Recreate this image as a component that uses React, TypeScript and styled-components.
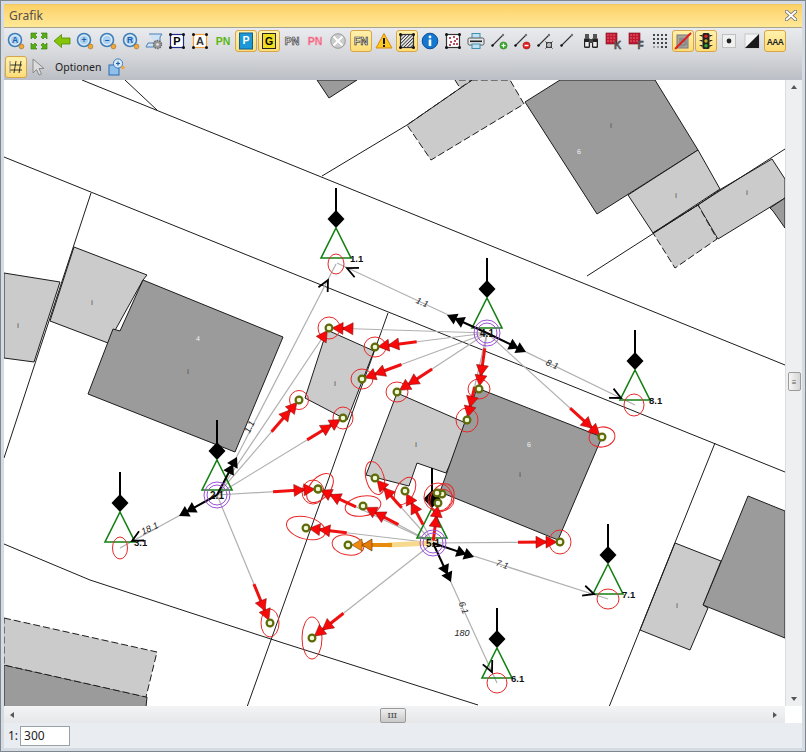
import React from 'react'
import styled, { createGlobalStyle } from 'styled-components'

type Pt = [number, number]

const GlobalStyle = createGlobalStyle`
  html, body { margin: 0; padding: 0; background: #e9ecf1; }
  body { font-family: "Noto Sans", "Liberation Sans", sans-serif; }
`

const Frame = styled.div`
  width: 806px;
  height: 752px;
  box-sizing: border-box;
  display: flex;
  flex-direction: column;
  padding: 3px;
  border: 1px solid #7f868e;
  background: #d5dbe3;
`

const TitleBar = styled.div`
  height: 24px;
  flex: none;
  box-sizing: border-box;
  display: flex;
  align-items: center;
  justify-content: space-between;
  padding: 0 5px 2px 5px;
  border-top: 1px solid #f3c860;
  border-bottom: 1px solid #a9a48c;
  background: linear-gradient(#fad066, #ffdc7e 45%, #ffe896);
`

const TitleText = styled.span`
  font-size: 12px;
  color: #55504a;
`

const Toolbars = styled.div`
  flex: none;
  height: 52px;
  display: flex;
  flex-direction: column;
  background: linear-gradient(#e9ebee, #d6d8dc 50%, #bbbec4);
`

const ToolRow = styled.div`
  height: 26px;
  display: flex;
  align-items: center;
  padding-left: 1px;
`

const ToolButton = styled.div<{ $active?: boolean }>`
  width: 22px;
  height: 22px;
  margin-right: 1px;
  box-sizing: border-box;
  display: flex;
  align-items: center;
  justify-content: center;
  border-radius: 3px;
  border: 1px solid ${p => (p.$active ? '#d8a548' : 'transparent')};
  background: ${p => (p.$active ? 'linear-gradient(#fff1ad, #fedd78)' : 'transparent')};
`

const OptionsLabel = styled.span`
  font-size: 10.5px;
  color: #222;
  margin: 0 7px 0 4px;
`

const MapRow = styled.div`
  flex: 1;
  min-height: 0;
  display: flex;
`

const Canvas = styled.div`
  flex: 1;
  overflow: hidden;
  background: #fff;
  svg { display: block; }
`

const VScroll = styled.div`
  width: 17px;
  flex: none;
  display: flex;
  flex-direction: column;
  align-items: center;
  background: #eeeff0;
  border-left: 1px solid #dcdcdc;
  box-sizing: border-box;
`

const VThumb = styled.div`
  width: 13px;
  height: 19px;
  margin-top: 283px;
  box-sizing: border-box;
  border: 1px solid #9a9a9a;
  border-radius: 2px;
  background: linear-gradient(90deg, #f6f6f6, #d5d5d5);
  display: flex;
  align-items: center;
  justify-content: center;
  font-size: 8px;
  line-height: 1;
  color: #555;
`

const ScrollArrow = styled.div<{ $dir: 'up' | 'down' | 'left' | 'right' }>`
  width: 0;
  height: 0;
  border: 3px solid transparent;
  ${p => (p.$dir === 'up' ? 'border-bottom: 4px solid #555; margin-top: 2px;' : '')}
  ${p => (p.$dir === 'down' ? 'border-top: 4px solid #555; margin-top: auto; margin-bottom: 2px;' : '')}
  ${p => (p.$dir === 'left' ? 'border-right: 4px solid #555; margin-left: 3px;' : '')}
  ${p => (p.$dir === 'right' ? 'border-left: 4px solid #555; margin-right: 5px;' : '')}
`

const HRow = styled.div`
  height: 17px;
  flex: none;
  display: flex;
`

const HScroll = styled.div`
  flex: 1;
  display: flex;
  align-items: center;
  justify-content: space-between;
  background: linear-gradient(#f3f4f5, #e6e7e8);
  padding-top: 1px;
  box-sizing: border-box;
`

const HThumb = styled.div`
  width: 26px;
  height: 15px;
  box-sizing: border-box;
  border: 1px solid #9a9a9a;
  border-radius: 2px;
  background: linear-gradient(#efefef, #c9c9c9);
  margin-left: -2px;
  display: flex;
  align-items: center;
  justify-content: center;
  font-size: 7px;
  font-weight: 700;
  letter-spacing: 0.5px;
  color: #555;
`

const Corner = styled.div`
  width: 17px;
  flex: none;
  background: #fff;
`

const StatusBar = styled.div`
  height: 25px;
  flex: none;
  display: flex;
  align-items: center;
  gap: 2px;
  padding-left: 4px;
  box-sizing: border-box;
  background: #e9ecf1;
  font-size: 12px;
  color: #222;
`

const ScaleBox = styled.div`
  width: 50px;
  height: 20px;
  box-sizing: border-box;
  background: #fff;
  border: 1px solid #9aa0a8;
  padding-left: 3px;
  font-size: 12px;
  line-height: 18px;
`

// ---------- toolbar icons ----------

const Svg = ({ children, size = 18 }: { children: React.ReactNode; size?: number }) => (
  <svg width={size} height={size} viewBox='0 0 18 18'>
    {children}
  </svg>
)

const iconFont = '"Liberation Sans", sans-serif'

const IconText = ({ x = 9, y = 13, size = 11, fill = '#000', stroke = 'none', sw = 0.6, children }: any) => (
  <text x={x} y={y} fontSize={size} fontFamily={iconFont} fontWeight={700} textAnchor='middle' fill={fill} stroke={stroke} strokeWidth={sw}>
    {children}
  </text>
)

const Lens = ({ label }: { label: string }) => (
  <Svg>
    <circle cx='8' cy='8' r='6.5' fill='#d8e9f8' stroke='#3f7fb8' strokeWidth='1.6' />
    <circle cx='8' cy='8' r='4' fill='#a9d0f0' />
    <IconText x={8} y={11} size={8.5} fill='#1f5fa8'>
      {label}
    </IconText>
    <circle cx='14.5' cy='14.5' r='2.4' fill='#f0a83c' stroke='#a06c1c' strokeWidth='0.6' />
  </Svg>
)

const Corners = ({ color }: { color: string }) => (
  <>
    <rect x='2.5' y='2.5' width='13' height='13' fill='#fff' stroke={color} strokeWidth='1.2' />
    {[[2.5, 2.5], [15.5, 2.5], [2.5, 15.5], [15.5, 15.5]].map(([x, y]) => (
      <circle key={`${x}-${y}`} cx={x} cy={y} r='1.5' fill='#111' />
    ))}
  </>
)

const LineIcon = ({ badge }: { badge?: React.ReactNode }) => (
  <Svg>
    <line x1='2' y1='14' x2='13' y2='3' stroke='#333' strokeWidth='1.1' />
    <circle cx='2.5' cy='13.5' r='1.2' fill='#111' />
    <circle cx='13' cy='3' r='1.2' fill='#777' />
    {badge}
  </Svg>
)

const RedBlock = ({ letter }: { letter: string }) => (
  <Svg>
    <rect x='1' y='1' width='11' height='11' fill='#c01830' stroke='#7c1020' strokeWidth='0.6' />
    {[3, 6, 9].map(x => [3, 6, 9].map(y => <circle key={`${x}${y}`} cx={x} cy={y} r='0.7' fill='#f08090' />))}
    <IconText x={12.5} y={17} size={10} fill='#666' stroke='#333' sw={0.4}>
      {letter}
    </IconText>
  </Svg>
)

const row1: { icon: React.ReactNode; active?: boolean }[] = [
  { icon: <Lens label='A' /> },
  {
    icon: (
      <Svg>
        <g fill='#58b010' stroke='#2f7a08' strokeWidth='0.6'>
          <path d='M1 1h6L5 3l2 2-2 2-2-2-2 2z' />
          <path d='M17 1h-6l2 2-2 2 2 2 2-2 2 2z' />
          <path d='M1 17h6l-2-2 2-2-2-2-2 2-2-2z' />
          <path d='M17 17h-6l2-2-2-2 2-2 2 2 2-2z' />
        </g>
      </Svg>
    ),
  },
  {
    icon: (
      <Svg>
        <path d='M1 9l7.5-6.5V6H17v6H8.5v3.5z' fill='#86c408' stroke='#4e8a08' strokeWidth='0.8' />
      </Svg>
    ),
  },
  { icon: <Lens label='+' /> },
  { icon: <Lens label='–' /> },
  { icon: <Lens label='R' /> },
  {
    icon: (
      <Svg>
        <path d='M4 2h13l-2 3v6H3l-2 4h11' fill='#cfe2f6' stroke='#4a80b8' strokeWidth='1' />
        <circle cx='12.5' cy='12.5' r='4' fill='#9a9a9a' stroke='#666' strokeDasharray='1.5 1' strokeWidth='1.4' />
        <circle cx='12.5' cy='12.5' r='1.3' fill='#e8e8e8' />
      </Svg>
    ),
  },
  {
    icon: (
      <Svg>
        <Corners color='#1f2f90' />
        <IconText size={11} y={13}>
          P
        </IconText>
      </Svg>
    ),
  },
  {
    icon: (
      <Svg>
        <Corners color='#f0a040' />
        <IconText size={11} y={13} fill='#333'>
          A
        </IconText>
      </Svg>
    ),
  },
  {
    icon: (
      <Svg>
        <IconText size={10.5} y={13} fill='#58b810'>
          PN
        </IconText>
      </Svg>
    ),
  },
  {
    active: true,
    icon: (
      <Svg>
        <rect x='2.5' y='1' width='13' height='16' fill='#1c98d8' stroke='#115f90' />
        <IconText size={10.5} y={12} fill='#fff'>
          P
        </IconText>
      </Svg>
    ),
  },
  {
    active: true,
    icon: (
      <Svg>
        <rect x='2.5' y='1.5' width='13' height='15' fill='#f0dc20' stroke='#222' />
        <IconText size={10.5} y={13}>
          G
        </IconText>
      </Svg>
    ),
  },
  {
    icon: (
      <Svg>
        <IconText size={10.5} y={13} fill='#ddd' stroke='#333'>
          PN
        </IconText>
      </Svg>
    ),
  },
  {
    icon: (
      <Svg>
        <IconText size={10.5} y={13} fill='#f04c70' stroke='#f4a0b0'>
          PN
        </IconText>
      </Svg>
    ),
  },
  {
    icon: (
      <Svg>
        <circle cx='9' cy='9' r='7.3' fill='#ccc' stroke='#999' />
        <path d='M4.5 4.5l9 9M13.5 4.5l-9 9' stroke='#fff' strokeWidth='1.8' />
      </Svg>
    ),
  },
  {
    active: true,
    icon: (
      <Svg>
        <IconText size={10.5} y={13} fill='#eee' stroke='#222'>
          FN
        </IconText>
      </Svg>
    ),
  },
  {
    icon: (
      <Svg>
        <path d='M9 1.5L17 16H1z' fill='#fcc820' stroke='#d88a10' strokeWidth='1' />
        <rect x='8' y='6' width='2' height='6' fill='#111' />
        <rect x='8' y='13' width='2' height='2' fill='#111' />
      </Svg>
    ),
  },
  {
    active: true,
    icon: (
      <Svg>
        <defs>
          <pattern id='hatch' width='2.4' height='2.4' patternUnits='userSpaceOnUse' patternTransform='rotate(45)'>
            <rect width='1' height='2.4' fill='#333' />
          </pattern>
        </defs>
        <Corners color='#333' />
        <rect x='3' y='3' width='12' height='12' fill='url(#hatch)' />
      </Svg>
    ),
  },
  {
    icon: (
      <Svg>
        <circle cx='9' cy='9' r='7.8' fill='#1477d0' stroke='#0d4f98' />
        <circle cx='9' cy='5' r='1.4' fill='#fff' />
        <rect x='7.7' y='7.5' width='2.6' height='6.5' fill='#fff' />
      </Svg>
    ),
  },
  {
    icon: (
      <Svg>
        <Corners color='#333' />
        {[[6, 6], [10, 5], [13, 7], [7, 10], [11, 9], [13, 12], [6, 13], [10, 12]].map(([x, y]) => (
          <circle key={`${x}-${y}`} cx={x} cy={y} r='1' fill='#a01830' />
        ))}
      </Svg>
    ),
  },
  {
    icon: (
      <Svg>
        <rect x='5' y='1.5' width='8' height='5' fill='#bfe0f0' stroke='#3f8fb0' />
        <rect x='1' y='6' width='16' height='7' rx='1.5' fill='#e4e6ea' stroke='#555' />
        <rect x='3' y='8.5' width='12' height='1.6' fill='#222' />
        <rect x='5' y='12' width='8' height='4.5' fill='#bfe0f0' stroke='#3f8fb0' />
      </Svg>
    ),
  },
  {
    icon: (
      <LineIcon
        badge={
          <>
            <circle cx='13.5' cy='13.5' r='3.6' fill='#40b030' stroke='#1f7018' strokeWidth='0.5' />
            <path d='M11.5 13.5h4M13.5 11.5v4' stroke='#fff' strokeWidth='1.2' />
          </>
        }
      />
    ),
  },
  {
    icon: (
      <LineIcon
        badge={
          <>
            <circle cx='13.5' cy='13.5' r='3.6' fill='#e02020' stroke='#901010' strokeWidth='0.5' />
            <path d='M11.5 13.5h4' stroke='#fff' strokeWidth='1.4' />
          </>
        }
      />
    ),
  },
  {
    icon: (
      <LineIcon
        badge={
          <>
            <rect x='10.5' y='10.5' width='5' height='5' fill='#bbb' stroke='#444' />
            <path d='M9.5 9.5l2 2M16.5 9.5l-2 2M9.5 16.5l2-2M16.5 16.5l-2-2' stroke='#333' />
          </>
        }
      />
    ),
  },
  { icon: <LineIcon /> },
  {
    icon: (
      <Svg>
        <rect x='2' y='6' width='6' height='10' rx='1.5' fill='#222' />
        <rect x='10' y='6' width='6' height='10' rx='1.5' fill='#222' />
        <rect x='3' y='2' width='4' height='5' fill='#555' />
        <rect x='11' y='2' width='4' height='5' fill='#555' />
        <rect x='7' y='7' width='4' height='4' fill='#444' />
        <rect x='3.2' y='10' width='3.5' height='4.5' fill='#eee' />
        <rect x='11.2' y='10' width='3.5' height='4.5' fill='#eee' />
      </Svg>
    ),
  },
  { icon: <RedBlock letter='K' /> },
  { icon: <RedBlock letter='F' /> },
  {
    icon: (
      <Svg>
        {[3, 7, 11, 15].map(x =>
          [3, 7, 11, 15].map(y => (
            <circle key={`${x}${y}`} cx={x} cy={y} r='1' fill={y > 12 && x < 8 ? '#888' : '#111'} />
          ))
        )}
      </Svg>
    ),
  },
  {
    active: true,
    icon: (
      <Svg>
        <rect x='3' y='3' width='11' height='13' fill='#a8a8a0' stroke='#777' />
        <IconText size={11} y={14} fill='#999' stroke='#777'>
          B
        </IconText>
        <line x1='1' y1='17' x2='17' y2='1' stroke='#e02020' strokeWidth='2' />
      </Svg>
    ),
  },
  {
    active: true,
    icon: (
      <Svg>
        <rect x='5.5' y='1' width='7' height='16' rx='1.5' fill='#222' />
        <path d='M2 3h3.5v2zM16 3h-3.5v2zM2 8h3.5v2zM16 8h-3.5v2zM2 13h3.5v2zM16 13h-3.5v2z' fill='#222' />
        <circle cx='9' cy='4.2' r='1.7' fill='#e02020' />
        <circle cx='9' cy='9' r='1.7' fill='#c8b020' />
        <circle cx='9' cy='13.8' r='1.7' fill='#30b030' />
      </Svg>
    ),
  },
  {
    icon: (
      <Svg>
        <rect x='2.5' y='2.5' width='13' height='13' fill='#f0f0f0' stroke='#c0c0c0' />
        <circle cx='9' cy='9' r='2.4' fill='#222' />
      </Svg>
    ),
  },
  {
    icon: (
      <Svg>
        <rect x='2' y='2' width='14' height='14' fill='#f4f4f4' stroke='#c8c8c8' />
        <path d='M16 2v14H2z' fill='#1a1a1a' />
      </Svg>
    ),
  },
  {
    active: true,
    icon: (
      <Svg>
        <text x='9' y='12.5' fontSize='8.5' fontWeight='700' fontFamily={iconFont} textAnchor='middle' letterSpacing='-0.6' fill='#222'>
          AAA
        </text>
      </Svg>
    ),
  },
]

// ---------- map drawing ----------

const pts = (list: Pt[]) => list.map(p => p.join(',')).join(' ')

const DARK = '#9b9b9b'
const LIGHT = '#cbcbcb'

const buildings: { fill: string; points: Pt[] }[] = [
  { fill: DARK, points: [[525, 102], [597, 214], [698, 150], [655, 80], [560, 80]] },
  { fill: DARK, points: [[317, 80], [329, 98], [357, 80]] },
  { fill: LIGHT, points: [[698, 150], [720, 189], [653, 233], [628, 195]] },
  { fill: LIGHT, points: [[721, 189], [772, 159], [785, 179], [785, 198], [718, 239], [698, 205]] },
  { fill: DARK, points: [[770, 208], [785, 198], [785, 228], [773, 211]] },
  { fill: LIGHT, points: [[4, 273], [60, 282], [34, 362], [4, 358]] },
  { fill: LIGHT, points: [[74, 247], [147, 275], [143, 280], [108, 343], [50, 321]] },
  { fill: DARK, points: [[143, 280], [283, 337], [235, 452], [88, 394], [113, 329], [120, 331]] },
  { fill: LIGHT, points: [[327, 330], [374, 351], [347, 420], [305, 398]] },
  { fill: LIGHT, points: [[397, 393], [468, 424], [446, 473], [417, 463], [409, 486], [366, 475]] },
  { fill: DARK, points: [[477, 388], [602, 437], [558, 540], [440, 492]] },
  { fill: DARK, points: [[748, 496], [785, 511], [785, 638], [703, 605], [721, 562]] },
  { fill: LIGHT, points: [[675, 543], [721, 561], [703, 605], [708, 608], [690, 650], [640, 630]] },
  { fill: DARK, points: [[4, 665], [147, 697], [146, 707], [4, 707]] },
]

const dashedBuildings: { points: Pt[]; solid?: Pt[] }[] = [
  { points: [[472, 80], [407, 125], [431, 160], [524, 104], [510, 80]], solid: [[472, 80], [407, 125]] },
  { points: [[455, 80], [460, 88], [472, 80]] },
  { points: [[653, 233], [698, 205], [717, 239], [675, 268]], solid: [[653, 233], [698, 205]] },
  { points: [[4, 618], [157, 652], [146, 697], [4, 665]] },
]

const parcelLines: Pt[][] = [
  [[82, 80], [785, 365]],
  [[4, 157], [785, 472]],
  [[125, 80], [157, 110]],
  [[322, 176], [407, 125]],
  [[587, 276], [785, 149]],
  [[91, 193], [4, 458]],
  [[388, 313], [247, 707]],
  [[4, 544], [90, 580], [280, 642], [478, 705]],
  [[715, 443], [609, 707]],
]

const tags: { x: number; y: number; t: string; white?: boolean }[] = [
  { x: 18, y: 325, t: 'I' },
  { x: 92, y: 302, t: 'I' },
  { x: 188, y: 371, t: 'I' },
  { x: 198, y: 338, t: '4', white: true },
  { x: 611, y: 125, t: 'I' },
  { x: 579, y: 151, t: '6', white: true },
  { x: 676, y: 195, t: 'I' },
  { x: 747, y: 192, t: 'I' },
  { x: 335, y: 383, t: 'I' },
  { x: 416, y: 444, t: 'I' },
  { x: 529, y: 444, t: '6', white: true },
  { x: 520, y: 474, t: 'I' },
  { x: 677, y: 605, t: 'I' },
]

const towers: { x: number; top: number; label?: string; lx?: number }[] = [
  { x: 336, top: 188, label: '1.1' },
  { x: 487, top: 258 },
  { x: 635, top: 330, label: '8.1' },
  { x: 608, top: 524, label: '7.1' },
  { x: 497, top: 608, label: '6.1' },
  { x: 432, top: 468 },
  { x: 217, top: 420 },
  { x: 120, top: 472, label: '3.1' },
]

const hubs: { x: number; y: number; label: string }[] = [
  { x: 487, y: 333, label: '4.1' },
  { x: 433, y: 543, label: '5.1' },
  { x: 217, y: 495, label: '2.1' },
]

const H41: Pt = [487, 333]
const H51: Pt = [433, 543]
const H21: Pt = [217, 495]

// from hub to node, red part length at the node's end
const links: { from: Pt; to: Pt; red: number }[] = [
  { from: H41, to: [329, 328], red: 18 },
  { from: H41, to: [375, 347], red: 42 },
  { from: H41, to: [362, 379], red: 42 },
  { from: H41, to: [397, 392], red: 42 },
  { from: H41, to: [479, 389], red: 41 },
  { from: H41, to: [467, 420], red: 34 },
  { from: H41, to: [602, 437], red: 43 },
  { from: H21, to: [299, 400], red: 42 },
  { from: H21, to: [343, 418], red: 42 },
  { from: H21, to: [318, 489], red: 45 },
  { from: H21, to: [270, 623], red: 42 },
  { from: H21, to: [329, 328], red: 14 },
  { from: H51, to: [318, 489], red: 42 },
  { from: H51, to: [363, 506], red: 40 },
  { from: H51, to: [375, 478], red: 40 },
  { from: H51, to: [405, 491], red: 38 },
  { from: H51, to: [438, 503], red: 38 },
  { from: H51, to: [560, 542], red: 42 },
  { from: H51, to: [306, 528], red: 41 },
  { from: H51, to: [312, 638], red: 40 },
]

const nodes: { x: number; y: number; rx: number; ry: number; rot?: number; cx?: number; cy?: number }[] = [
  { x: 329, y: 328, rx: 11, ry: 11 },
  { x: 375, y: 347, rx: 11, ry: 10 },
  { x: 362, y: 379, rx: 11, ry: 10 },
  { x: 397, y: 392, rx: 11, ry: 10 },
  { x: 479, y: 389, rx: 11, ry: 10 },
  { x: 467, y: 420, rx: 11, ry: 12 },
  { x: 602, y: 437, rx: 13, ry: 10, rot: -10 },
  { x: 299, y: 400, rx: 9.5, ry: 9.5 },
  { x: 343, y: 418, rx: 10, ry: 11 },
  { x: 318, y: 489, rx: 11, ry: 12, cx: 313, cy: 492 },
  { x: 318, y: 489, rx: 10, ry: 17, rot: 40, cx: 320, cy: 488 },
  { x: 363, y: 506, rx: 18, ry: 10, rot: -10 },
  { x: 375, y: 478, rx: 9, ry: 17, rot: -15 },
  { x: 405, y: 491, rx: 9, ry: 15, rot: 30 },
  { x: 438, y: 503, rx: 14, ry: 14, cy: 497 },
  { x: 442, y: 494, rx: 11, ry: 15, rot: 30, cy: 498 },
  { x: 437, y: 493, rx: 13, ry: 11, cx: 441, cy: 500 },
  { x: 560, y: 542, rx: 11, ry: 12 },
  { x: 306, y: 528, rx: 20, ry: 11, rot: 15 },
  { x: 348, y: 545, rx: 16, ry: 10, rot: 10 },
  { x: 312, y: 638, rx: 10, ry: 21 },
  { x: 270, y: 623, rx: 9, ry: 14 },
]

const towerRings: { x: number; y: number; rx: number; ry: number }[] = [
  { x: 336, y: 264, rx: 8, ry: 10 },
  { x: 634, y: 405, rx: 10, ry: 11 },
  { x: 608, y: 599, rx: 11, ry: 10 },
  { x: 497, y: 683, rx: 10, ry: 10 },
  { x: 120, y: 548, rx: 7.5, ry: 11 },
]

// hub, black arrow tip, end of the gray line, open arrow tip
const feeders: { from: Pt; tip: Pt; end: Pt; open: Pt }[] = [
  { from: H41, tip: [447, 315], end: [337, 263], open: [347, 268] },
  { from: H41, tip: [526, 352], end: [635, 405], open: [621, 398] },
  { from: H51, tip: [474, 557], end: [608, 599], open: [594, 594] },
  { from: H51, tip: [451, 582], end: [497, 683], open: [492, 672] },
  { from: H21, tip: [179, 516], end: [120, 548], open: [132, 541] },
  { from: H21, tip: [237, 457], end: [336, 264], open: [328, 280] },
]

const mapTexts: { x: number; y: number; t: string; rot: number }[] = [
  { x: 422, y: 303, t: '1.1', rot: 22 },
  { x: 552, y: 365, t: '8.1', rot: 22 },
  { x: 502, y: 565, t: '7.1', rot: 18 },
  { x: 463, y: 608, t: '6.1', rot: 68 },
  { x: 462, y: 634, t: '180', rot: 0 },
  { x: 150, y: 529, t: '18.1', rot: -25 },
  { x: 250, y: 427, t: '1.1', rot: -65 },
]

const unit = (a: Pt, b: Pt): Pt => {
  const dx = b[0] - a[0]
  const dy = b[1] - a[1]
  const l = Math.hypot(dx, dy)
  return [dx / l, dy / l]
}

const along = (p: Pt, d: Pt, len: number): Pt => [p[0] + d[0] * len, p[1] + d[1] * len]

const headPoints = (tip: Pt, d: Pt, len: number, hw: number): string => {
  const base = along(tip, d, -len)
  const n: Pt = [-d[1], d[0]]
  return pts([tip, along(base, n, hw), along(base, n, -hw)])
}

const RedLink = ({ from, to, red }: { from: Pt; to: Pt; red: number }) => {
  const d = unit(from, to)
  const start = along(to, d, -red)
  const tip1 = along(to, d, -3)
  const tip2 = along(to, d, -13)
  return (
    <>
      <line x1={start[0]} y1={start[1]} x2={tip2[0]} y2={tip2[1]} stroke='#f01010' strokeWidth='3' />
      {red > 16 && <polygon points={headPoints(tip2, d, 11, 6)} fill='#f80808' stroke='#7a1010' strokeWidth='0.5' />}
      <polygon points={headPoints(tip1, d, 11, 6)} fill='#f80808' stroke='#7a1010' strokeWidth='0.5' />
    </>
  )
}

const Feeder = ({ from, tip, open }: { from: Pt; tip: Pt; open: Pt }) => {
  const d = unit(from, tip)
  const second = along(tip, d, -8)
  const back = unit(open, from)
  const ang = Math.PI / 7
  const rot = (v: Pt, a: number): Pt => [v[0] * Math.cos(a) - v[1] * Math.sin(a), v[0] * Math.sin(a) + v[1] * Math.cos(a)]
  const b1 = along(open, rot(back, ang), 12)
  const b2 = along(open, rot(back, -ang), 12)
  return (
    <>
      <line x1={from[0]} y1={from[1]} x2={second[0]} y2={second[1]} stroke='#000' strokeWidth='2' />
      <polygon points={headPoints(tip, d, 10, 6)} fill='#000' />
      <polygon points={headPoints(second, d, 10, 6)} fill='#000' />
      <polyline points={pts([b1, open, b2])} fill='none' stroke='#000' strokeWidth='1.8' />
    </>
  )
}

const MapDrawing = () => (
  <svg width='781' height='627' viewBox='4 80 781 627' fontFamily='"Liberation Sans", sans-serif'>
    {buildings.map((b, i) => (
      <polygon key={i} points={pts(b.points)} fill={b.fill} stroke='#1c1c1c' strokeWidth='1' />
    ))}
    {dashedBuildings.map((b, i) => (
      <g key={i}>
        <polygon points={pts(b.points)} fill={LIGHT} stroke='#1c1c1c' strokeWidth='1' strokeDasharray='7 3' />
        {b.solid && <polyline points={pts(b.solid)} fill='none' stroke='#1c1c1c' strokeWidth='1' />}
      </g>
    ))}
    {parcelLines.map((l, i) => (
      <polyline key={i} points={pts(l)} fill='none' stroke='#1c1c1c' strokeWidth='1' />
    ))}
    {tags.map((t, i) => (
      <text
        key={i}
        x={t.x}
        y={t.y + 3}
        fontSize='7'
        textAnchor='middle'
        transform={`rotate(0.5 ${t.x} ${t.y})`}
        fill={t.white ? '#f4f4f4' : '#444'}
      >
        {t.t}
      </text>
    ))}

    {links.map((l, i) => (
      <line key={i} x1={l.from[0]} y1={l.from[1]} x2={l.to[0]} y2={l.to[1]} stroke='#b0b0b0' strokeWidth='1.2' />
    ))}
    {feeders.map((f, i) => (
      <line key={i} x1={f.from[0]} y1={f.from[1]} x2={f.end[0]} y2={f.end[1]} stroke='#b0b0b0' strokeWidth='1.2' />
    ))}

    {towers.map(t => (
      <g key={t.x}>
        <line x1={t.x} y1={t.top} x2={t.x} y2={t.top + 24} stroke='#000' strokeWidth='2' />
        <polygon points={pts([[t.x, t.top + 22], [t.x + 8.5, t.top + 31], [t.x, t.top + 40], [t.x - 8.5, t.top + 31]])} fill='#000' />
        <polygon points={pts([[t.x, t.top + 40], [t.x + 15, t.top + 70], [t.x - 15, t.top + 70]])} fill='none' stroke='#168016' strokeWidth='1.6' />
        {t.label && (
          <text x={t.x + 14} y={t.top + 74} fontSize='9.5' fontWeight='700' fill='#111'>
            {t.label}
          </text>
        )}
      </g>
    ))}
    {towerRings.map((r, i) => (
      <ellipse key={i} cx={r.x} cy={r.y} rx={r.rx} ry={r.ry} fill='none' stroke='#e82828' strokeWidth='1' />
    ))}
    {nodes.map((n, i) => {
      const cx = n.cx ?? n.x
      const cy = n.cy ?? n.y
      return (
        <ellipse
          key={i}
          cx={cx}
          cy={cy}
          rx={n.rx}
          ry={n.ry}
          transform={n.rot ? `rotate(${n.rot} ${cx} ${cy})` : undefined}
          fill='none'
          stroke='#e82828'
          strokeWidth='1'
        />
      )
    })}

    {links.map((l, i) => (
      <RedLink key={i} from={l.from} to={l.to} red={l.red} />
    ))}

    <line x1='433' y1='543' x2='388' y2='545' stroke='#f7d98e' strokeWidth='5' />
    <line x1='392' y1='545' x2='362' y2='545' stroke='#e68a10' strokeWidth='4' />
    <polygon points={headPoints([362, 545], [-1, 0], 10, 6)} fill='#e87c08' stroke='#5a3008' strokeWidth='0.6' />
    <polygon points={headPoints([352, 545], [-1, 0], 10, 6)} fill='#f08a10' stroke='#7a4a08' strokeWidth='0.6' />

    {feeders.map((f, i) => (
      <Feeder key={i} from={f.from} tip={f.tip} open={f.open} />
    ))}

    {nodes.map((n, i) => (
      <circle key={i} cx={n.x} cy={n.y} r='3.4' fill='#eef7d8' stroke='#5f6a08' strokeWidth='2.2' />
    ))}

    {hubs.map(h => (
      <g key={h.label}>
        <circle cx={h.x} cy={h.y} r='13' fill='none' stroke='#9a50d8' strokeWidth='1' />
        <circle cx={h.x} cy={h.y} r='10' fill='none' stroke='#9a50d8' strokeWidth='1' />
        <text x={h.x} y={h.y + 3.5} fontSize='10' fontWeight='700' textAnchor='middle' fill='#111'>
          {h.label}
        </text>
      </g>
    ))}

    {mapTexts.map((t, i) => (
      <text
        key={i}
        x={t.x}
        y={t.y}
        fontSize='9'
        fontStyle='italic'
        textAnchor='middle'
        dominantBaseline='middle'
        transform={t.rot ? `rotate(${t.rot} ${t.x} ${t.y})` : undefined}
        fill='#222'
      >
        {t.t}
      </text>
    ))}
  </svg>
)

const App = () => (
  <>
    <GlobalStyle />
    <Frame>
      <TitleBar>
        <TitleText>Grafik</TitleText>
        <svg width='12' height='11' viewBox='0 0 12 11'>
          <path d='M1.5 1.5l9 8M10.5 1.5l-9 8' stroke='#666' strokeWidth='3.6' strokeLinecap='round' />
          <path d='M1.5 1.5l9 8M10.5 1.5l-9 8' stroke='#fff' strokeWidth='2' strokeLinecap='round' />
        </svg>
      </TitleBar>
      <Toolbars>
        <ToolRow>
          {row1.map((b, i) => (
            <ToolButton key={i} $active={b.active}>
              {b.icon}
            </ToolButton>
          ))}
        </ToolRow>
        <ToolRow>
          <ToolButton $active>
            <Svg>
              <path d='M3 7h12M3 12h12M9 3L7 15M14 3l-2 12' stroke='#222' strokeWidth='0.9' />
              <path d='M3 3v12' stroke='#888' strokeWidth='1' />
            </Svg>
          </ToolButton>
          <ToolButton>
            <Svg>
              <path d='M3 1v14l3.5-3.5 2.5 5.5 2.5-1-2.5-5.5h5z' fill='#dcdcdc' stroke='#8a8a8a' />
            </Svg>
          </ToolButton>
          <OptionsLabel>Optionen</OptionsLabel>
          <Svg>
            <rect x='1' y='7' width='10' height='10' fill='#8fc0ec' stroke='#2a6cb0' />
            <circle cx='10' cy='5.5' r='4.6' fill='#d8e9f8' stroke='#3f7fb8' />
            <path d='M8 5.5h4M10 3.5v4' stroke='#1f5fa8' strokeWidth='1.2' />
            <circle cx='15' cy='9.5' r='1.8' fill='#f0a83c' />
          </Svg>
        </ToolRow>
      </Toolbars>
      <MapRow>
        <Canvas>
          <MapDrawing />
        </Canvas>
        <VScroll>
          <ScrollArrow $dir='up' />
          <VThumb>≡</VThumb>
          <ScrollArrow $dir='down' />
        </VScroll>
      </MapRow>
      <HRow>
        <HScroll>
          <ScrollArrow $dir='left' />
          <HThumb>III</HThumb>
          <ScrollArrow $dir='right' />
        </HScroll>
        <Corner />
      </HRow>
      <StatusBar>
        <span>1:</span>
        <ScaleBox>300</ScaleBox>
      </StatusBar>
    </Frame>
  </>
)

export default App
